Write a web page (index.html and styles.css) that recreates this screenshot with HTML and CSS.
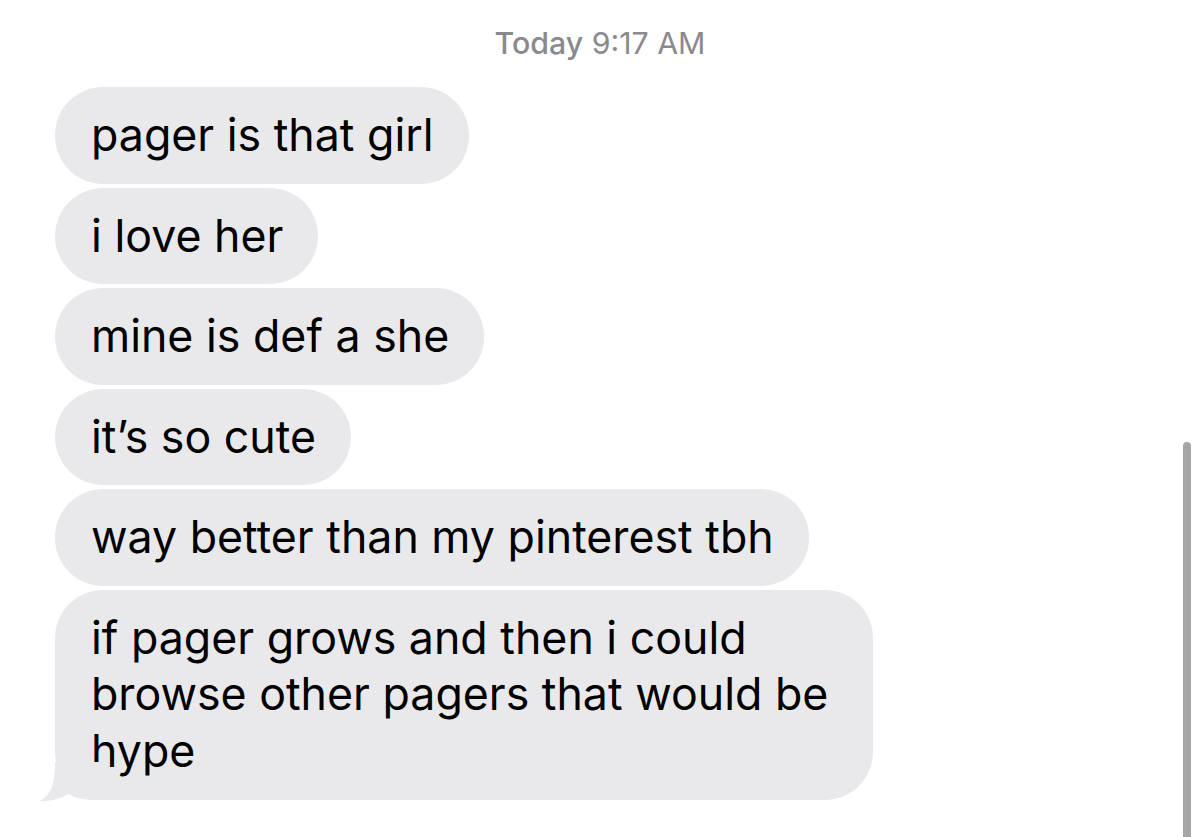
FILE: index.html
```html
<!DOCTYPE html>
<html lang="en">
<head>
<meta charset="utf-8">
<title>Messages</title>
<link rel="stylesheet" href="styles.css">
</head>
<body>
<main class="thread">
  <div class="timestamp"><span class="day">Today</span> 9:17 AM</div>
  <div class="messages">
    <div class="bubble">pager is that girl</div>
    <div class="bubble">i love her</div>
    <div class="bubble">mine is def a she</div>
    <div class="bubble">it’s so cute</div>
    <div class="bubble">way better than my pinterest tbh</div>
    <div class="bubble bubble-last">if pager grows and then i could browse other pagers that would be hype<svg class="tail" width="70" height="40" viewBox="0 0 70 40" aria-hidden="true"><path d="M16,0 C16,22 12,33 1,39 C10,39.5 22,37 30,32 C36,36 44,38 60,38 L70,38 L70,0 Z"/></svg></div>
  </div>
  <div class="scroll-indicator"></div>
</main>
</body>
</html>
```
FILE: styles.css
```css
html, body {
  margin: 0;
  padding: 0;
  background: #ffffff;
}

body {
  width: 1200px;
  height: 837px;
  overflow: hidden;
  font-family: "Inter", "Liberation Sans", sans-serif;
}

.thread {
  position: relative;
  height: 837px;
  padding-top: 25px;
  box-sizing: border-box;
}

.timestamp {
  text-align: center;
  font-size: 30.3px;
  line-height: 36px;
  color: #8a8a8e;
  font-weight: 400;
}

.timestamp .day {
  font-weight: 500;
}

.messages {
  margin-top: 26px;
  padding-left: 55px;
  display: flex;
  flex-direction: column;
  align-items: flex-start;
  gap: 4px;
}

.bubble {
  position: relative;
  background: #e9e9eb;
  color: #000000;
  font-size: 44.7px;
  line-height: 56px;
  padding: 20.25px 35px 20.25px 36px;
  border-radius: 48px;
  max-width: 818px;
  box-sizing: border-box;
}

.bubble-last {
  line-height: 56.5px;
}

.tail {
  position: absolute;
  left: -16px;
  bottom: -2px;
  fill: #e9e9eb;
}

.scroll-indicator {
  position: absolute;
  left: 1183px;
  top: 442px;
  width: 8px;
  height: 420px;
  border-radius: 4px;
  background: #a5a5a5;
}
```
